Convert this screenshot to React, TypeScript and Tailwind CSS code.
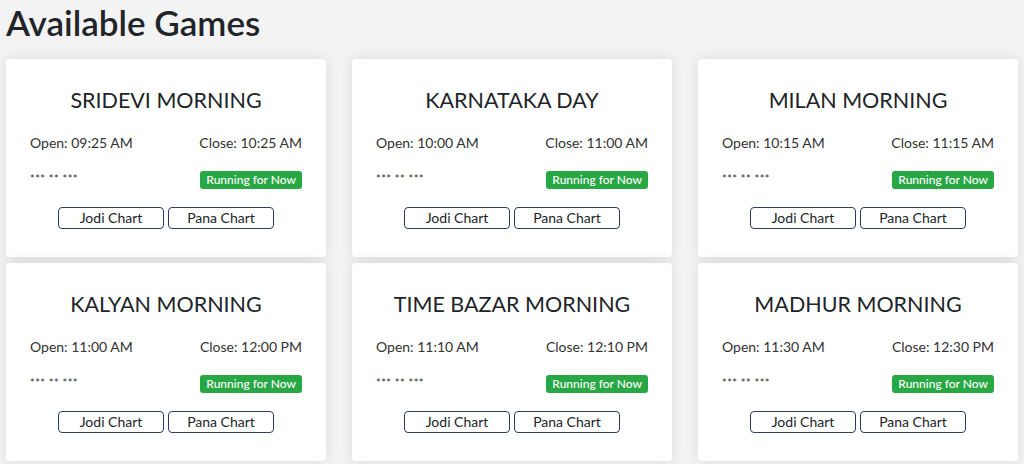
import React from 'react';

const games = [
  { name: 'SRIDEVI MORNING', open: '09:25 AM', close: '10:25 AM' },
  { name: 'KARNATAKA DAY', open: '10:00 AM', close: '11:00 AM' },
  { name: 'MILAN MORNING', open: '10:15 AM', close: '11:15 AM' },
  { name: 'KALYAN MORNING', open: '11:00 AM', close: '12:00 PM' },
  { name: 'TIME BAZAR MORNING', open: '11:10 AM', close: '12:10 PM' },
  { name: 'MADHUR MORNING', open: '11:30 AM', close: '12:30 PM' },
];

function GameCard({ name, open, close }: { name: string; open: string; close: string }) {
  return (
    <div className="bg-white rounded-[4px] shadow-[0_0_14px_rgba(0,0,0,0.1)] h-[198px] px-6 pt-[27px] flex flex-col">
      {/* Name */}
      <h3 className="text-center text-[21.5px] leading-[29px] text-[#212529]">{name}</h3>

      {/* Timings */}
      <div className="mt-[18px] flex items-center justify-between text-[14px] leading-[20px] text-[#333]">
        <span>Open: {open}</span>
        <span>Close: {close}</span>
      </div>

      {/* Result + status */}
      <div className="mt-[18px] h-[18px] flex items-center justify-between">
        <span className="text-[11px] text-[#333] tracking-[0.5px] pb-[2px]">*** ** ***</span>
        <span className="h-[18px] px-[6px] flex items-center rounded-[3px] bg-[#28a745] text-white text-[12px] font-medium">
          Running for Now
        </span>
      </div>

      {/* Charts */}
      <div className="mt-[18px] flex justify-center gap-1">
        <button className="w-[106px] h-[22px] rounded-[4px] border border-[#2c3e5c] text-[14px] leading-[20px] text-[#212529] bg-white">Jodi Chart</button>
        <button className="w-[106px] h-[22px] rounded-[4px] border border-[#2c3e5c] text-[14px] leading-[20px] text-[#212529] bg-white">Pana Chart</button>
      </div>
    </div>
  );
}

export default function App() {
  return (
    <div className="min-h-[464px] bg-[#f3f3f3] px-[6px] font-['Lato','Noto_Sans',sans-serif]">
      <h2 className="text-[35px] leading-[42px] font-semibold text-[#212529] pt-[1px]">Available Games</h2>
      <div className="mt-[16px] grid grid-cols-3 gap-x-[26px] gap-y-[6px]">
        {games.map((g) => (
          <GameCard key={g.name} {...g} />
        ))}
      </div>
    </div>
  );
}
